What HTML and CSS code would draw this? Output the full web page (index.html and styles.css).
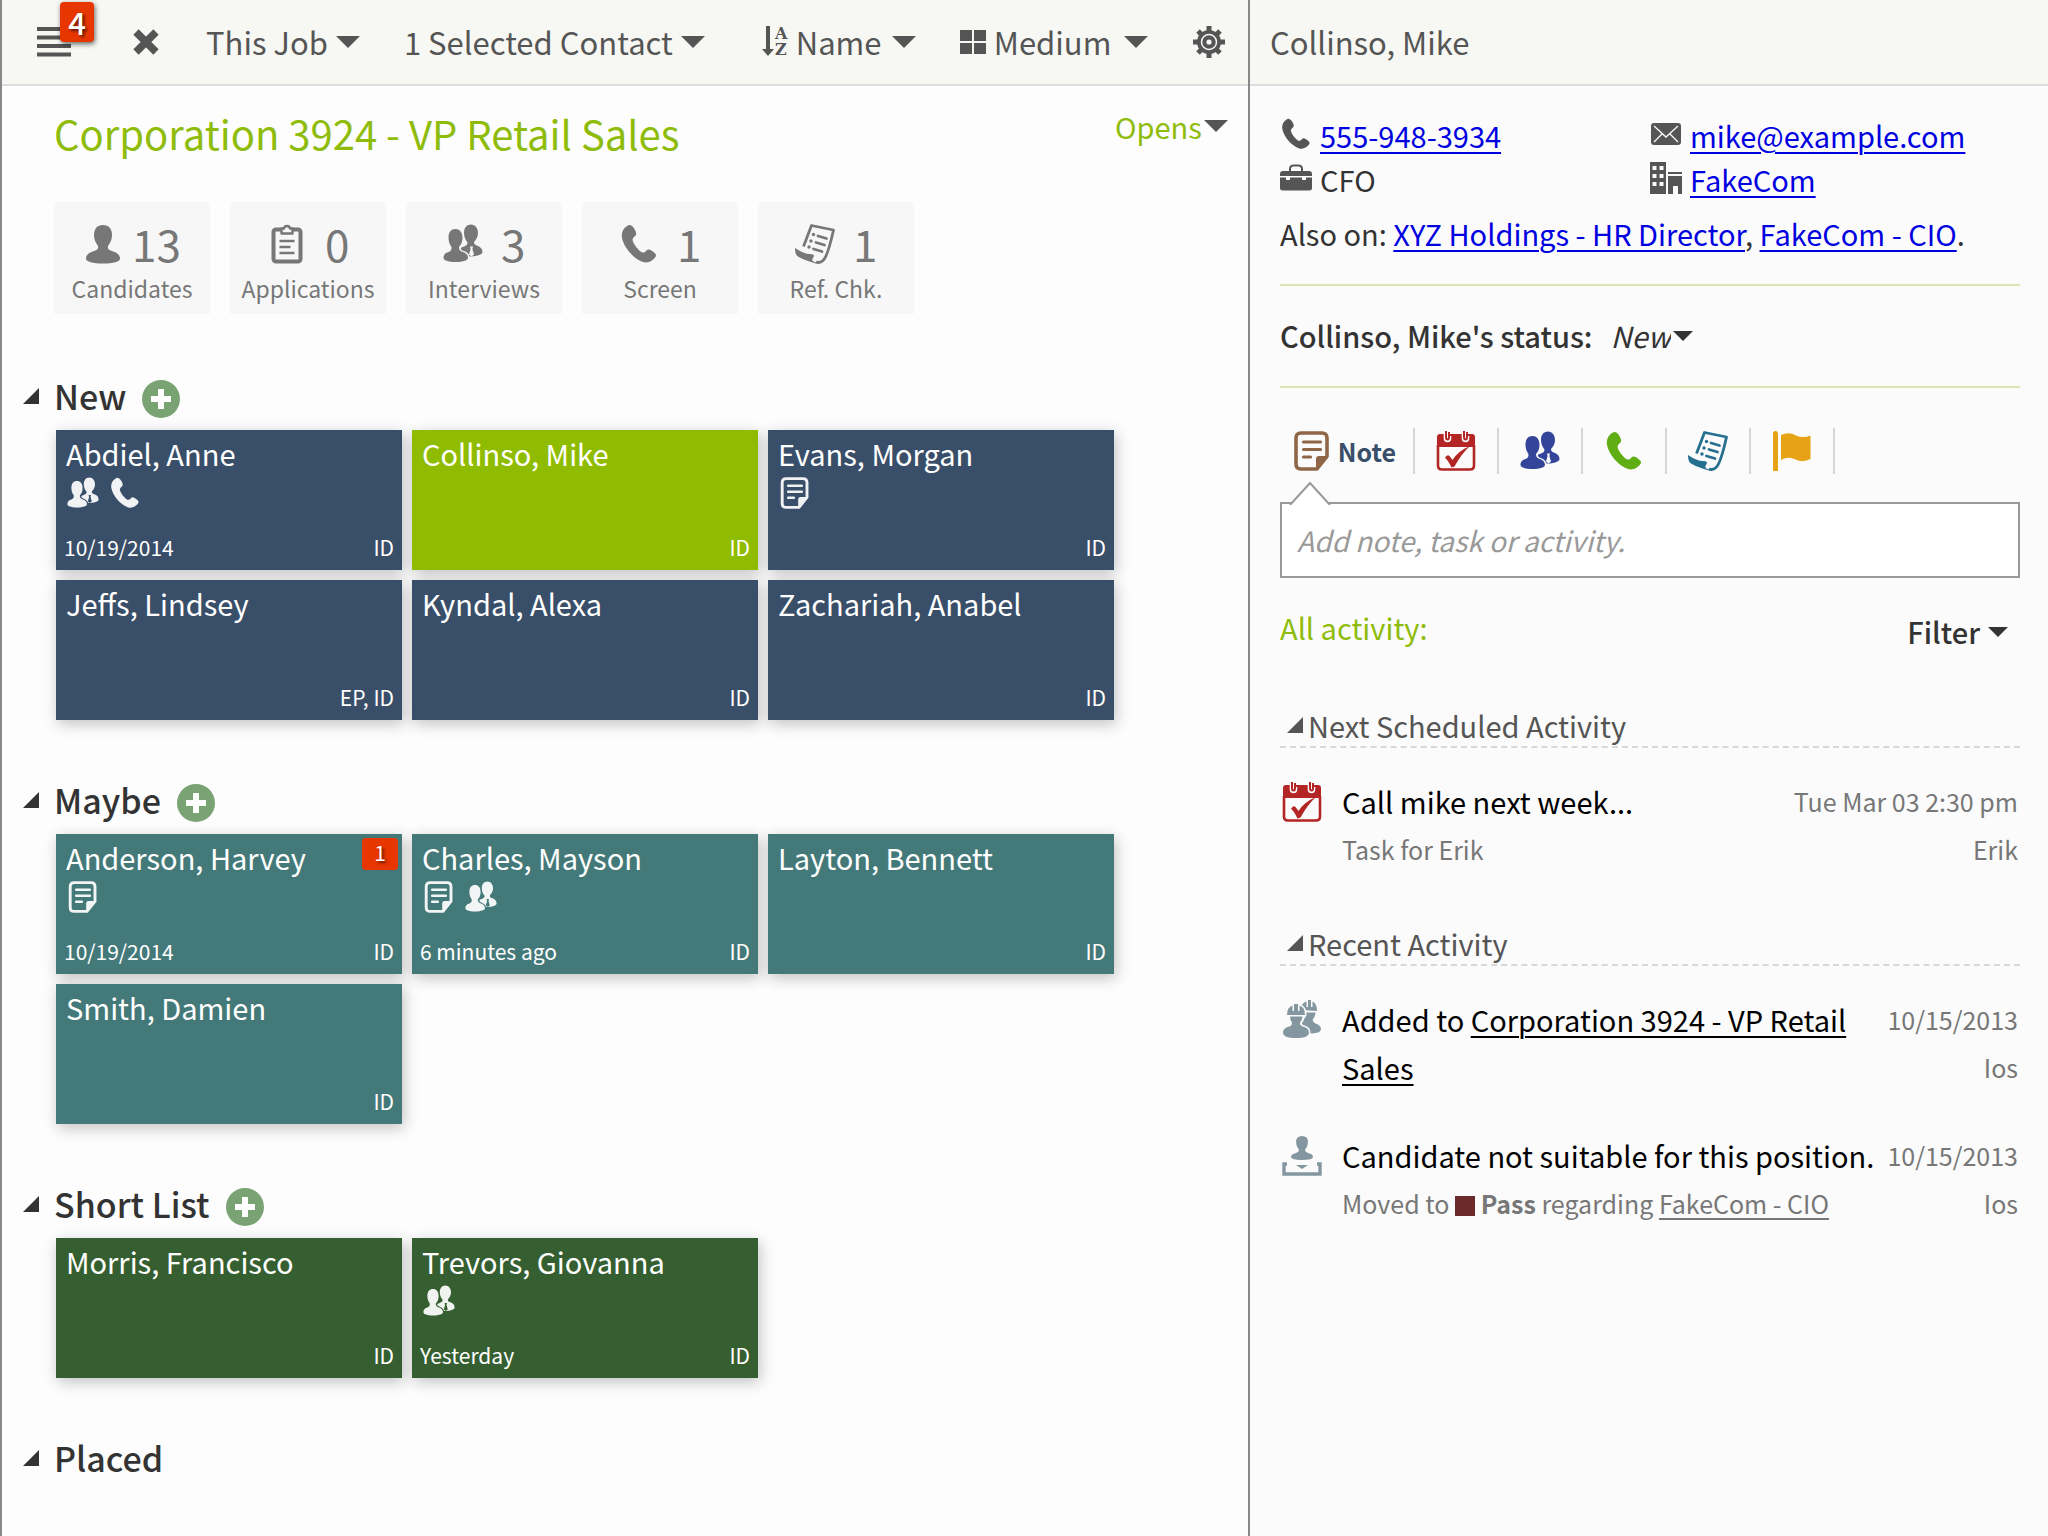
FILE: index.html
```html
<!DOCTYPE html>
<html lang="en">
<head>
<meta charset="utf-8">
<title>Corporation 3924 - VP Retail Sales</title>
<meta name="viewport" content="width=device-width, initial-scale=1">
<link rel="stylesheet" href="styles.css">
</head>
<body>
<svg class="sprite" aria-hidden="true">
  <defs>
    <mask id="behind-front" maskUnits="userSpaceOnUse" x="0" y="0" width="40" height="40">
      <rect width="40" height="40" fill="#fff"/>
      <path d="M12 5C8 5 5.500 8 5.500 14c0 4 1.500 7 3 9 0 3-.5 4-3 5-4 1-5 3.500-5 6 0 2 4 4 12 4s13-2 13-4c0-3-2-5-5-6s-4-2-4-5c2-2 3-5 3-9 0-6-3-9-7.500-9z" fill="#000" stroke="#000" stroke-width="2"/>
      <path d="M27 22.500h3l-.6 2.500 1.600 5.500-2.500 2-2.500-2 1.600-5.500z" fill="#000"/>
    </mask>
    <mask id="behind-worker" maskUnits="userSpaceOnUse" x="0" y="0" width="40" height="40">
      <rect width="40" height="40" fill="#fff"/>
      <path d="M5 15q0-8 6-9.500 3-2 6 0Q23 7 23 15l-2 3q-1 3-3 5 0 2.500 3 3.500 6 1.500 6 6 0 5.500-13 5.500T1 32.500V15z" fill="#000" stroke="#000" stroke-width="3"/>
    </mask>
  </defs>
  <symbol id="person" viewBox="0 0 40 40"><path d="M20 1c-6 0-9 4-9 10 0 5 2 8 4 11 .6 3-.5 4-4 5-5 1.500-8 4-8 7.500C3 38 10 39.500 20 39.500S37 38 37 34.500c0-3.500-3-6-8-7.500-3.500-1-4.600-2-4-5 2-3 4-6 4-11 0-6-3-10-9-10z"/></symbol>
  <symbol id="people" viewBox="0 0 40 40">
    <path d="M12.500 5C8 5 5.500 8 5.500 14c0 4 1.500 7 3 9 0 3-.5 4-3 5-4 1-5 3.500-5 6 0 2 4 4 12 4s12.500-2 12.500-4c0-3-2-5-5-6s-4-2-4-5c2-2 3.500-5 3.500-9 0-6-3-9-7-9z"/>
    <path mask="url(#behind-front)" d="M28 .5c-4.500 0-7 3.500-7 8.500 0 4 1.500 7 3.500 9.500 0 2-1 3-3.500 4-4 1-5 3-5 6 0 2 4 4 11 4s12.500-2 12.500-4.500c0-3-2-5-4.500-6-3-1-4-2-4-4 2-2 4-5 4-9 0-5-3-8.500-7-8.500z"/>
  </symbol>
  <symbol id="phone" viewBox="0 0 40 40"><path d="M10 1C5 3 2 8 3 14c2 10 12 21 21 24 5 1.500 10-1 13-6 .5-1.500-1-3-4.500-5.500-2.500-1.500-4-1.500-5.500.5s-3.500 2-5.500.5c-3-2.500-6.500-7-7.500-10-1-2 0-4 1.500-5 2-1.500 2-3 1-5.500C15 3.500 12.500.5 10 1z"/></symbol>
  <symbol id="note" viewBox="0 0 40 40">
    <path d="M35 25.500V7q0-5-5-5H9Q4 2 4 7v26q0 5 5 5h16z" fill="none" stroke="currentColor" stroke-width="3.600" stroke-linejoin="round"/>
    <path d="M36 25H27q-3 0-3 3v11z"/>
    <path d="M11.500 11h17M11.500 18.500h17M11.500 26h7" stroke="currentColor" stroke-width="3.200" stroke-linecap="round"/>
  </symbol>
  <symbol id="calendar" viewBox="0 0 40 40">
    <path d="M1 16V6q0-3 3-3h32q3 0 3 3v10z"/>
    <path d="M2 14v20.500q0 4 4 4h28q4 0 4-4V14" fill="none" stroke="currentColor" stroke-width="2.600"/>
    <path d="M10 1v6q0 2 1.500 2T13 7V5M28 1v6q0 2 1.500 2T31 7V5" fill="none" stroke="#fbfbfb" stroke-width="4.600"/>
    <path d="M10 0v6q0 2.500 1.500 2.500T13 6V1M28 0v6q0 2.500 1.500 2.500T31 6V1" fill="none" stroke="currentColor" stroke-width="2"/>
    <path d="M9 27q2-4 4.500-2l3 4Q22 20 34 15 26 22 18.500 35.500l-3 1Q12 29 9 27z"/>
  </symbol>
  <symbol id="scroll" viewBox="0 0 40 40">
    <path d="M8.500 22.500 16.500 1.500 38.500 6q-6 27-10.500 30.500-3 3-7 1.500" fill="none" stroke="currentColor" stroke-width="2.800" stroke-linejoin="round"/>
    <path d="M0 24q9 6 15 6t3 4 6 5l-3 .5Q3 34 1.500 31 0 29 0 24z"/>
    <path d="M23 12l8.500 2.500M21 18.500l8.500 2.500M18.500 25l8.500 2.500" stroke="currentColor" stroke-width="2.800" stroke-linecap="round"/>
    <circle cx="18.500" cy="10.500" r="1.700"/><circle cx="16" cy="17" r="1.700"/><circle cx="14" cy="23" r="1.700"/>
  </symbol>
  <symbol id="flag" viewBox="0 0 40 40"><path d="M1 2.500Q1 0 3.500 0T6 2.500V40H1zM9 4q8-3.500 15 .5 7 3 14.500 0V28q-8 4-15 .5T9 29z"/></symbol>
  <symbol id="clipboard" viewBox="0 0 40 40">
    <rect x="6.500" y="5.500" width="27" height="32" rx="2.500" fill="none" stroke="currentColor" stroke-width="4"/>
    <path class="clip" d="M14.500 4.500h2.500q.5-2.500 3-2.500t3 2.500h2.500v5h-11z" stroke="currentColor" stroke-width="2.400" stroke-linejoin="round"/>
    <path d="M12.500 17h15M12.500 23h11M12.500 29h15" stroke="currentColor" stroke-width="2.600"/>
  </symbol>
  <symbol id="mail" viewBox="0 0 32 32"><rect x="1" y="5" width="30" height="22" rx="3"/><path d="M4 8l12 11L28 8M4 24l8-8M28 24l-8-8" fill="none" stroke="#fbfbfb" stroke-width="1.300"/></symbol>
  <symbol id="briefcase" viewBox="0 0 32 32">
    <path d="M10 9V7q0-3.500 3.500-3.500h5Q22 3.500 22 7v2" fill="none" stroke="currentColor" stroke-width="2"/>
    <path d="M0 14V12q0-3 3-3h26q3 0 3 3v2z"/><path d="M0 15.500h6V18h4v-2.500h12V18h4v-2.500h6V26q0 2.500-3 2.500H3q-3 0-3-2.500z"/>
  </symbol>
  <symbol id="building" viewBox="0 0 32 32"><path fill-rule="evenodd" d="M0 0h16v32H0zM2.500 4v4h4V4zM9.500 4v4h4V4zM2.500 12v4h4v-4zM9.500 12v4h4v-4zM2.500 20v4h4v-4zM9.500 20v4h4v-4zM18 10h14v2H18zM18 14h14v18h-4v-8h-5v8h-5z"/></symbol>
  <symbol id="workers" viewBox="0 0 40 40">
    <g mask="url(#behind-worker)"><path d="M18 10Q19 3 24.500 1.500V7H26V0h3v7h1.500V1.500Q35 3.500 35 11z"/><path d="M20 12.500h13.500q0 4-2.500 6.500-1 3 2.500 4.500 5.500 2 5.500 5.500 0 4-9 4.500H20z"/></g>
    <path d="M5 15q0-8 5.500-9.500V11H12V4h4v7h1.500V5.500Q23 7 23 15z"/>
    <path d="M8 16.500h12.500q-.5 4-2.500 6-.5 3 3 4 6 1.500 6 6 0 5.500-13 5.500T1 32.500q0-4.500 6-6 3.500-1 3-4-2-2-2-6z"/>
  </symbol>
  <symbol id="tray" viewBox="0 0 40 40">
    <path d="M20 0q-6 0-6 6 0 4 3 8 0 2-3 3-5 1-5 4 0 3 11 3t11-3q0-3-5-4-3-1-3-3 3-4 3-8 0-6-6-6zM14 29h12l-6 4z"/>
    <path d="M5 28H2v10h36V28h-3" fill="none" stroke="currentColor" stroke-width="3.400"/>
  </symbol>
  <symbol id="gear" viewBox="0 0 34 34">
    <g stroke="currentColor" stroke-width="5">
      <path d="M17 1v32M1 17h32M6 6l22 22M28 6L6 28"/>
    </g>
    <circle cx="17" cy="17" r="12"/>
    <circle cx="17" cy="17" r="7.500" fill="none" stroke="#f7f8f3" stroke-width="1.500"/>
    <circle cx="17" cy="17" r="2.600" fill="#f7f8f3"/>
  </symbol>
  <symbol id="plus" viewBox="0 0 38 38"><circle cx="19" cy="19" r="19" fill="#7aa374"/><path d="M19 9v20M9 19h20" stroke="#fff" stroke-width="6"/></symbol>
  <symbol id="close" viewBox="0 0 28 28"><path d="M4 4l20 20M24 4L4 24" stroke="currentColor" stroke-width="7.500"/></symbol>
  <symbol id="lines" viewBox="0 0 34 30"><path d="M0 0h34v4H0zM0 8.500h34v4H0zM0 17h34v4H0zM0 25.500h34v4H0z"/></symbol>
  <symbol id="blocks" viewBox="0 0 26 24"><path d="M0 0h12v11H0zM14 0h12v11H14zM0 13h12v11H0zM14 13h12v11H14z"/></symbol>
</svg>

<div class="app">
  <main class="pipeline">
    <header class="bar toolbar">
      <button class="menu" type="button" aria-label="Menu"><svg class="icon-lines"><use href="#lines"/></svg><span class="badge menu-badge">4</span></button>
      <button class="close" type="button" aria-label="Close"><svg class="icon-close"><use href="#close"/></svg></button>
      <button class="drop" type="button" aria-haspopup="menu">This Job</button>
      <button class="drop" type="button" aria-haspopup="menu">1 Selected Contact</button>
      <label class="drop sort" aria-label="Sort by">
        <svg class="icon-sort" viewBox="0 0 28 36" aria-hidden="true"><path d="M4 2h4v23h4l-6 7-6-7h4z"/><text x="13" y="15">A</text><text x="13" y="31">Z</text></svg>
        <select><option>Name</option></select>
      </label>
      <label class="drop" aria-label="Card size">
        <svg class="icon-blocks"><use href="#blocks"/></svg>
        <select><option>Medium</option></select>
      </label>
      <button class="settings" type="button" aria-label="Settings"><svg class="icon-gear"><use href="#gear"/></svg></button>
    </header>

    <div class="board">
      <div class="job">
        <h1>Corporation 3924 - VP Retail Sales</h1>
        <label class="drop opens" aria-label="Job status"><select><option>Opens</option></select></label>
      </div>

      <ul class="stats">
        <li class="stat"><div class="stat-top"><svg class="icon-l"><use href="#person"/></svg><b>13</b></div>Candidates</li>
        <li class="stat"><div class="stat-top"><svg class="icon-l"><use href="#clipboard"/></svg><b>0</b></div>Applications</li>
        <li class="stat"><div class="stat-top"><svg class="icon-l"><use href="#people"/></svg><b>3</b></div>Interviews</li>
        <li class="stat"><div class="stat-top"><svg class="icon-l"><use href="#phone"/></svg><b>1</b></div>Screen</li>
        <li class="stat"><div class="stat-top"><svg class="icon-l"><use href="#scroll"/></svg><b>1</b></div>Ref. Chk.</li>
      </ul>

      <section class="stage new">
        <div class="stage-head"><i class="fold"></i><h2>New</h2><button type="button" aria-label="Add to New"><svg class="icon-plus"><use href="#plus"/></svg></button></div>
        <div class="cards">
          <a class="card" href="#"><span class="name">Abdiel, Anne</span><span class="marks"><svg class="icon-s"><use href="#people"/></svg><svg class="icon-s"><use href="#phone"/></svg></span><span class="foot"><span>10/19/2014</span><span class="owner">ID</span></span></a>
          <a class="card selected" href="#"><span class="name">Collinso, Mike</span><span class="foot"><span class="owner">ID</span></span></a>
          <a class="card" href="#"><span class="name">Evans, Morgan</span><span class="marks"><svg class="icon-s"><use href="#note"/></svg></span><span class="foot"><span class="owner">ID</span></span></a>
          <a class="card" href="#"><span class="name">Jeffs, Lindsey</span><span class="foot"><span class="owner">EP, ID</span></span></a>
          <a class="card" href="#"><span class="name">Kyndal, Alexa</span><span class="foot"><span class="owner">ID</span></span></a>
          <a class="card" href="#"><span class="name">Zachariah, Anabel</span><span class="foot"><span class="owner">ID</span></span></a>
        </div>
      </section>

      <section class="stage maybe">
        <div class="stage-head"><i class="fold"></i><h2>Maybe</h2><button type="button" aria-label="Add to Maybe"><svg class="icon-plus"><use href="#plus"/></svg></button></div>
        <div class="cards">
          <a class="card" href="#"><span class="name">Anderson, Harvey</span><span class="badge card-badge">1</span><span class="marks"><svg class="icon-s"><use href="#note"/></svg></span><span class="foot"><span>10/19/2014</span><span class="owner">ID</span></span></a>
          <a class="card" href="#"><span class="name">Charles, Mayson</span><span class="marks"><svg class="icon-s"><use href="#note"/></svg><svg class="icon-s"><use href="#people"/></svg></span><span class="foot"><span>6 minutes ago</span><span class="owner">ID</span></span></a>
          <a class="card" href="#"><span class="name">Layton, Bennett</span><span class="foot"><span class="owner">ID</span></span></a>
          <a class="card" href="#"><span class="name">Smith, Damien</span><span class="foot"><span class="owner">ID</span></span></a>
        </div>
      </section>

      <section class="stage short">
        <div class="stage-head"><i class="fold"></i><h2>Short List</h2><button type="button" aria-label="Add to Short List"><svg class="icon-plus"><use href="#plus"/></svg></button></div>
        <div class="cards">
          <a class="card" href="#"><span class="name">Morris, Francisco</span><span class="foot"><span class="owner">ID</span></span></a>
          <a class="card" href="#"><span class="name">Trevors, Giovanna</span><span class="marks"><svg class="icon-s"><use href="#people"/></svg></span><span class="foot"><span>Yesterday</span><span class="owner">ID</span></span></a>
        </div>
      </section>

      <section class="stage">
        <div class="stage-head"><i class="fold"></i><h2>Placed</h2></div>
      </section>
    </div>
  </main>

  <aside class="contact">
    <header class="bar">Collinso, Mike</header>
    <div class="details">
      <div class="facts">
        <div class="fact"><svg class="icon-f"><use href="#phone"/></svg><a href="#">555-948-3934</a></div>
        <div class="fact"><svg class="icon-f"><use href="#mail"/></svg><a href="#">mike@example.com</a></div>
        <div class="fact"><svg class="icon-f"><use href="#briefcase"/></svg>CFO</div>
        <div class="fact"><svg class="icon-f"><use href="#building"/></svg><a href="#">FakeCom</a></div>
      </div>
      <p class="also">Also on: <a href="#">XYZ Holdings - HR Director</a>, <a href="#">FakeCom - CIO</a>.</p>

      <div class="status"><label for="status">Collinso, Mike's status:</label><span class="drop small tight"><select id="status"><option>New</option></select></span></div>

      <div class="tabs">
        <button class="tab tab-note" type="button"><svg class="icon-l"><use href="#note"/></svg><span>Note</span></button>
        <button class="tab tab-task" type="button" aria-label="Task"><svg class="icon-l"><use href="#calendar"/></svg></button>
        <button class="tab tab-meet" type="button" aria-label="Interview"><svg class="icon-l"><use href="#people"/></svg></button>
        <button class="tab tab-call" type="button" aria-label="Call"><svg class="icon-l"><use href="#phone"/></svg></button>
        <button class="tab tab-ref" type="button" aria-label="Reference check"><svg class="icon-l"><use href="#scroll"/></svg></button>
        <button class="tab tab-flag" type="button" aria-label="Flag"><svg class="icon-l"><use href="#flag"/></svg></button>
      </div>
      <div class="compose">
        <svg class="notch" viewBox="0 0 42 24" aria-hidden="true"><path d="M1 24L21 2l20 22" fill="#fff" stroke="#999" stroke-width="2"/></svg>
        <input type="text" placeholder="Add note, task or activity." aria-label="Add note, task or activity">
      </div>

      <div class="activity-head"><span>All activity:</span><button class="drop small" type="button" aria-haspopup="menu">Filter</button></div>

      <section class="feed">
        <h3><i class="fold"></i>Next Scheduled Activity</h3>
        <article class="entry">
          <svg class="icon-l red"><use href="#calendar"/></svg>
          <div class="what"><p>Call mike next week...</p><p class="sub">Task for Erik</p></div>
          <div class="when">Tue Mar 03 2:30 pm<br>Erik</div>
        </article>
      </section>

      <section class="feed">
        <h3><i class="fold"></i>Recent Activity</h3>
        <article class="entry">
          <svg class="icon-l slate"><use href="#workers"/></svg>
          <div class="what"><p>Added to <a href="#">Corporation 3924 - VP Retail Sales</a></p></div>
          <div class="when">10/15/2013<br>Ios</div>
        </article>
        <article class="entry">
          <svg class="icon-l slate"><use href="#tray"/></svg>
          <div class="what"><p>Candidate not suitable for this position.</p><p class="sub">Moved to <i class="swatch"></i> <b>Pass</b> regarding <a href="#">FakeCom - CIO</a></p></div>
          <div class="when">10/15/2013<br>Ios</div>
        </article>
      </section>
    </div>
  </aside>
</div>
</body>
</html>
```
FILE: styles.css
```css
* { box-sizing: border-box; }

body {
  margin: 0;
  background: #fdfdfd;
  color: #333;
  font-family: "Noto Sans CJK SC", "Noto Sans", sans-serif;
  font-size: 29px;
  line-height: 44px;
}

h1, h2, h3, p, ul { margin: 0; padding: 0; font-weight: 400; }
ul { list-style: none; }
svg { display: block; flex: none; fill: currentColor; }
.sprite { position: absolute; width: 0; height: 0; }

button, select, input { font: inherit; color: inherit; }
button, select {
  appearance: none;
  margin: 0;
  padding: 0;
  border: 0;
  background: none;
  cursor: pointer;
}

/* Icon sizes */
.icon-l { width: 40px; height: 40px; }
.icon-s { width: 32px; height: 32px; }
.icon-f { width: 32px; height: 32px; }
.icon-plus { width: 38px; height: 38px; }
.icon-lines { width: 34px; height: 30px; }
.icon-close { width: 28px; height: 28px; }
.icon-sort { width: 28px; height: 36px; }
.icon-sort text { font: bold 16px "DejaVu Serif", serif; }
.icon-blocks { width: 26px; height: 24px; }
.icon-gear { width: 34px; height: 34px; }

/* Frame */
.app {
  display: grid;
  grid-template-columns: minmax(0, 609fr) minmax(0, 391fr);
  min-height: 100vh;
  border-left: 2px solid #888;
}
.contact { border-left: 2px solid #888; background: #fbfbfb; }
.bar {
  display: flex;
  align-items: center;
  height: 86px;
  padding: 0 20px 1px;
  border-bottom: 2px solid #ddd;
  background: #f7f8f3;
  color: #555;
  font-size: 31px;
}

/* Drop-downs */
.drop { display: inline-flex; align-items: center; gap: 8px; white-space: nowrap; }
.drop::after {
  content: "";
  border: solid transparent;
  border-width: 12px 12px 0;
  border-top-color: #555;
}
.drop.small::after { margin-top: 2px; border-width: 10px 10px 0; border-top-color: #333; }
.drop.tight { gap: 2px; }

/* Toolbar */
.toolbar { gap: 44px; padding: 0 20px 1px 35px; }
.toolbar select { margin-right: 4px; }
.menu { position: relative; margin-right: 17px; }
.close { margin-right: 2px; }
.sort { gap: 6px; margin-left: 13px; }
.badge {
  position: absolute;
  border-radius: 4px;
  background: #e83600;
  color: #fff;
  text-align: center;
  text-shadow: 2px 2px 3px rgba(0, 0, 0, .6);
}
.menu-badge {
  top: -25px;
  left: 23px;
  width: 34px;
  height: 40px;
  font-size: 31px;
  font-weight: 500;
  line-height: 40px;
  box-shadow: 1px 2px 5px rgba(0, 0, 0, .6);
}

/* Board */
.board { padding: 24px 20px 40px 52px; }
.job { display: flex; justify-content: space-between; color: #8fbc0b; }
.job h1 { font-size: 40px; line-height: 46px; }
.opens { gap: 2px; height: 32px; }

.stats { display: flex; flex-wrap: wrap; gap: 20px; margin: 46px 0 2px; }
.stat {
  width: 156px;
  height: 112px;
  padding-top: 22px;
  background: #f7f7f7;
  color: #777;
  font-size: 23px;
  line-height: 40px;
  text-align: center;
}
.stat-top { display: flex; justify-content: center; gap: 9px; height: 44px; }
.stat b { min-width: 34px; font-size: 44px; font-weight: 400; line-height: 38px; text-align: right; }

.stage-head { display: flex; align-items: center; height: 114px; padding-top: 46px; }
.stage-head .fold { margin-left: -31px; margin-right: 15px; }
.stage-head h2 { margin-right: 16px; font-size: 34px; font-weight: 500; }
.stage-head button { padding-top: 5px; }
.fold {
  flex: none;
  width: 16px;
  height: 16px;
  background: currentColor;
  clip-path: polygon(100% 0, 100% 100%, 0 100%);
}

.cards { display: grid; grid-template-columns: repeat(auto-fill, 346px); gap: 10px; margin-left: 2px; }
.card {
  position: relative;
  display: flex;
  flex-direction: column;
  height: 140px;
  padding: 1px 8px 5px;
  box-shadow: 2px 4px 14px rgba(0, 0, 0, .24);
  color: #fff;
  text-decoration: none;
}
.name { padding-left: 2px; }
.marks { display: flex; gap: 10px; margin-top: 2px; padding-left: 3px; opacity: .93; }
.foot { display: flex; margin-top: auto; font-size: 21px; line-height: 36px; }
.owner { margin-left: auto; }
.new .card { background: #394e68; }
.new .selected { background: #8fbc00; }
.maybe .card { background: #44797a; }
.short .card { background: #365f31; }
.card-badge { top: 4px; right: 4px; width: 36px; height: 32px; font-size: 21px; line-height: 28px; }

/* Contact details */
.details { padding: 27px 28px 40px 30px; }
.facts { display: grid; grid-template-columns: 1fr 1fr; }
.fact { display: flex; align-items: center; gap: 8px; }
.fact svg { color: #555; margin-bottom: 3px; }
.details a { color: #0000e0; text-underline-offset: 4px; text-decoration-thickness: 2px; }
.also { margin-top: 10px; padding-bottom: 29px; border-bottom: 2px solid #dbe6b3; }
.status { display: flex; gap: 18px; padding: 27px 0 29px; border-bottom: 2px solid #dbe6b3; }
.status label { font-weight: 500; }
.status select { font-style: italic; }

.tabs { display: flex; margin-top: 40px; }
.tab {
  display: flex;
  align-items: center;
  justify-content: center;
  gap: 6px;
  width: 84px;
  height: 46px;
  border-right: 2px solid #d5d5d5;
}
.tab-note { width: 135px; padding-right: 5px; color: #8f6647; }
.tab-note span { color: #394e68; font-size: 25px; font-weight: 700; }
.tab-task { color: #b42525; }
.tab-meet { color: #344498; }
.tab-call { color: #60ad14; }
.tab-ref { color: #26708f; }
.tab-flag { color: #e5a315; }

.compose { position: relative; margin-top: 28px; }
.compose input {
  display: block;
  width: 100%;
  height: 76px;
  padding: 0 15px;
  border: 2px solid #999;
  border-radius: 0;
  background: #fff;
  font-size: 28px;
}
.compose input::placeholder { color: #999; font-style: italic; opacity: 1; }
.notch { position: absolute; top: -21px; left: 9px; width: 42px; height: 24px; }

.activity-head { display: flex; justify-content: space-between; margin-top: 27px; padding-right: 12px; color: #8fbc0b; }
.activity-head button { margin-top: 4px; color: #333; font-weight: 500; }

.feed { margin-top: 53px; }
.activity-head + .feed { margin-top: 55px; }
.feed h3 {
  display: flex;
  align-items: center;
  gap: 5px;
  height: 40px;
  padding: 0 0 4px 7px;
  border-bottom: 2px dashed #d8d8d8;
  color: #555;
  font-size: 29px;
}
.entry { display: flex; gap: 10px; margin-top: 40px; color: #000; line-height: 48px; }
.feed h3 + .entry { margin-top: 29px; }
.entry svg { margin: 5px 10px 0 2px; }
.what { flex: 1; min-width: 0; }
.what a { color: inherit; }
.when { padding-right: 2px; color: #777; font-size: 25px; text-align: right; white-space: nowrap; }
.sub { color: #777; font-size: 25px; }
.swatch { display: inline-block; width: 20px; height: 20px; background: #6c2a2a; vertical-align: -2px; }
.red { color: #b42525; }
.slate { color: #8497a0; }
.clip { fill: #f7f7f7; }
```
